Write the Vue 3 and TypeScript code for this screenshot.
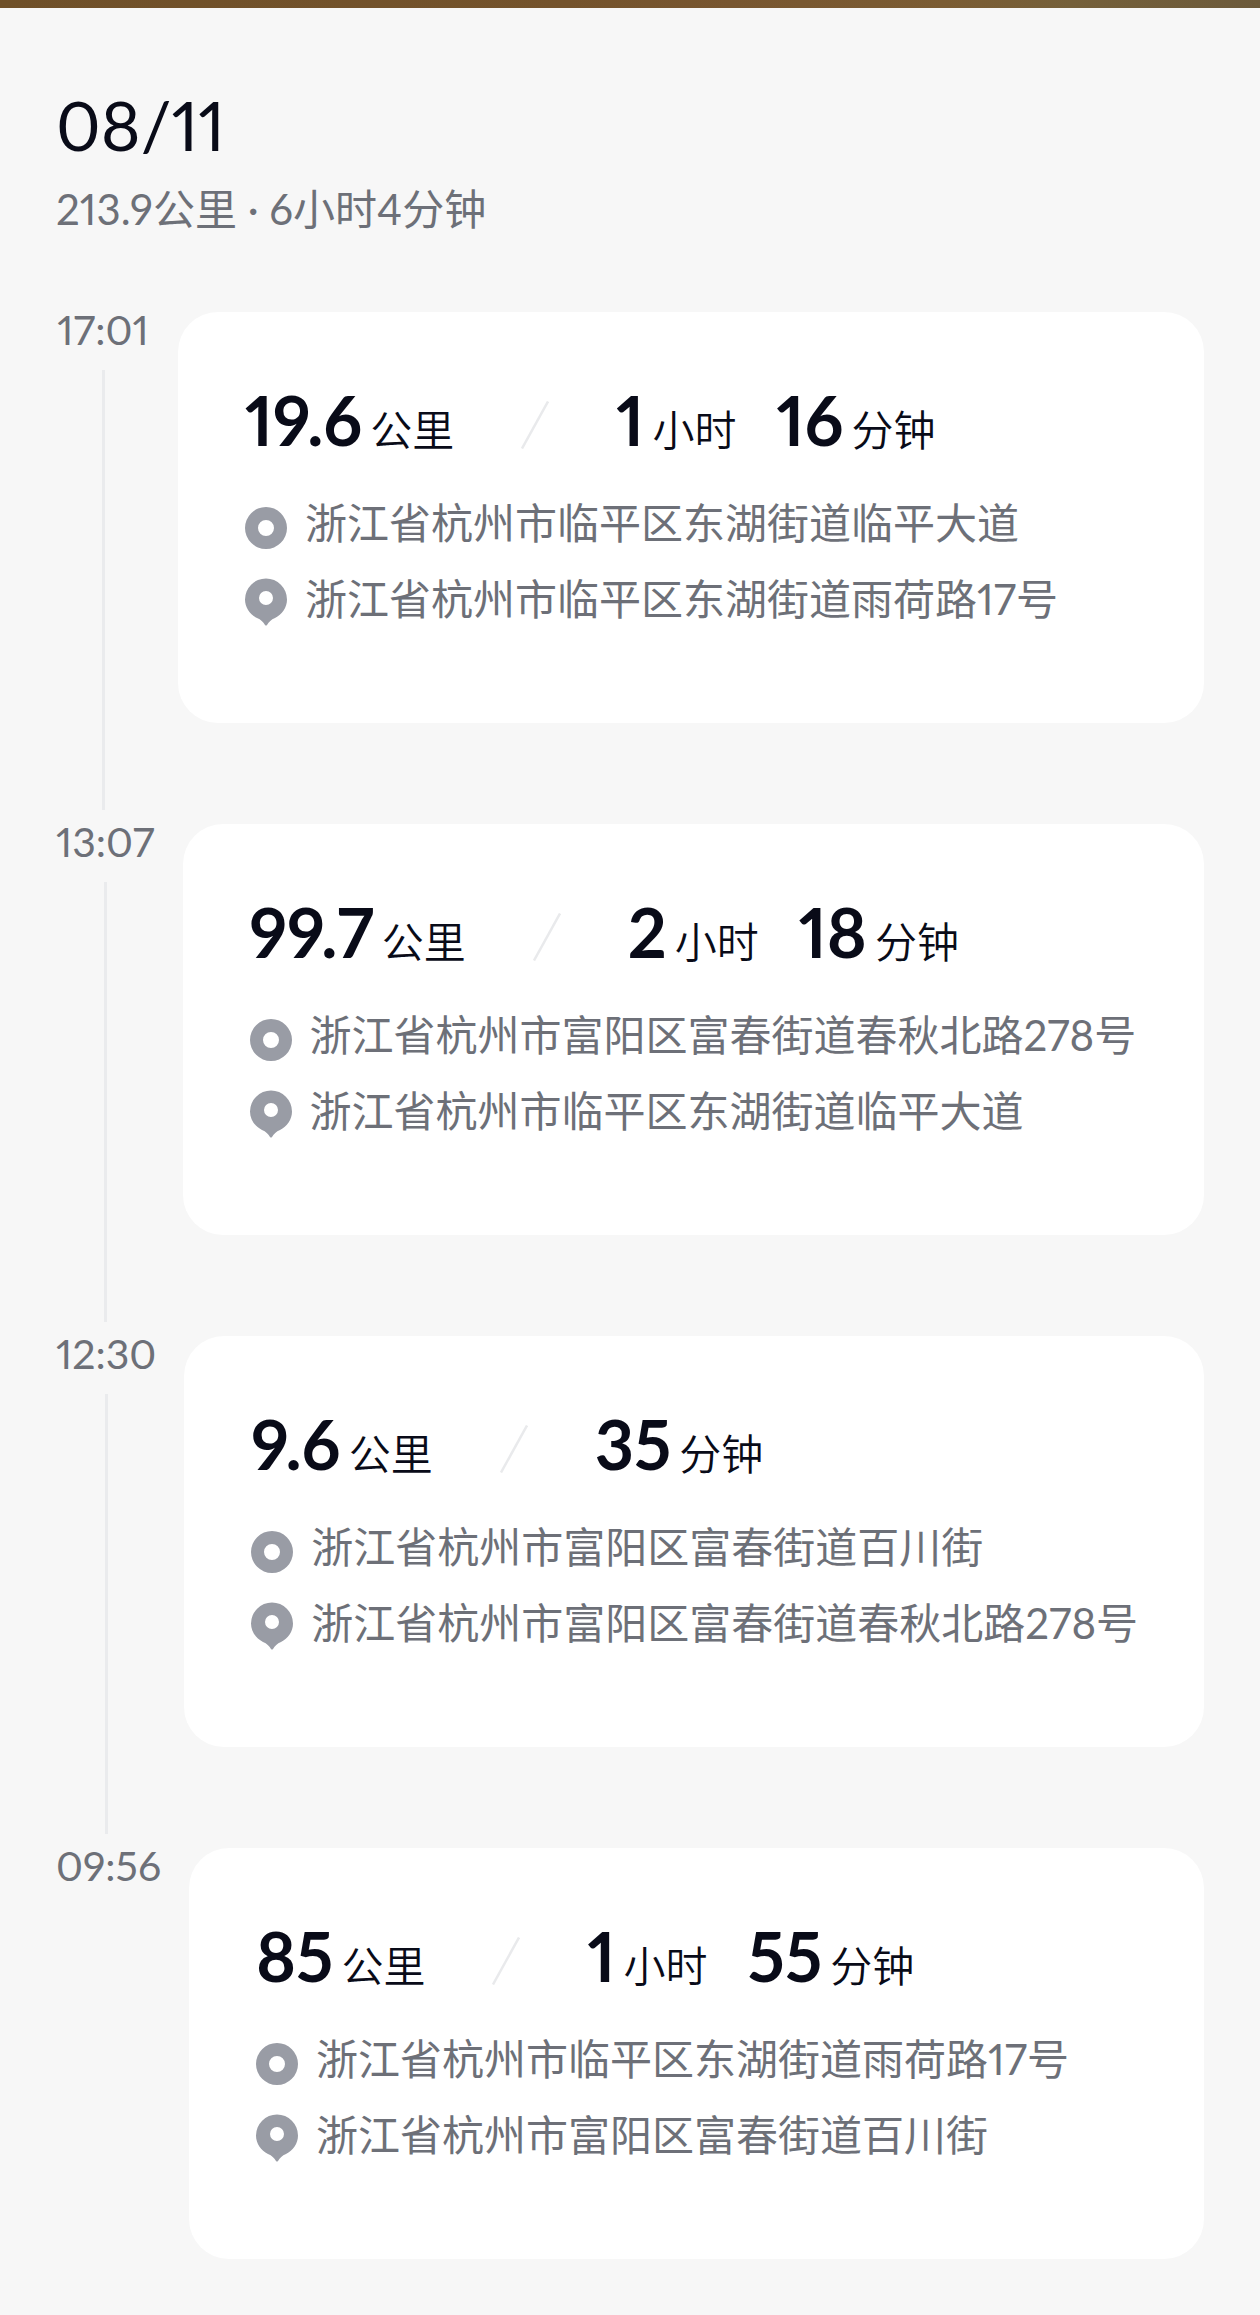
<script setup lang="ts">
interface Measure {
  value: string
  unit: string
}

interface Trip {
  time: string
  distance: Measure
  duration: Measure[]
  from: string
  to: string
}

const date = '08/11'
const summary = '213.9公里 · 6小时4分钟'

const trips: Trip[] = [
  {
    time: '17:01',
    distance: { value: '19.6', unit: '公里' },
    duration: [
      { value: '1', unit: '小时' },
      { value: '16', unit: '分钟' },
    ],
    from: '浙江省杭州市临平区东湖街道临平大道',
    to: '浙江省杭州市临平区东湖街道雨荷路17号',
  },
  {
    time: '13:07',
    distance: { value: '99.7', unit: '公里' },
    duration: [
      { value: '2', unit: '小时' },
      { value: '18', unit: '分钟' },
    ],
    from: '浙江省杭州市富阳区富春街道春秋北路278号',
    to: '浙江省杭州市临平区东湖街道临平大道',
  },
  {
    time: '12:30',
    distance: { value: '9.6', unit: '公里' },
    duration: [{ value: '35', unit: '分钟' }],
    from: '浙江省杭州市富阳区富春街道百川街',
    to: '浙江省杭州市富阳区富春街道春秋北路278号',
  },
  {
    time: '09:56',
    distance: { value: '85', unit: '公里' },
    duration: [
      { value: '1', unit: '小时' },
      { value: '55', unit: '分钟' },
    ],
    from: '浙江省杭州市临平区东湖街道雨荷路17号',
    to: '浙江省杭州市富阳区富春街道百川街',
  },
]
</script>

<template>
  <main class="page">
    <div class="cover"></div>
    <header class="day">
      <h1 class="date">{{ date }}</h1>
      <p class="summary">{{ summary }}</p>
    </header>

    <ol class="timeline">
      <li v-for="trip in trips" :key="trip.time" class="entry">
        <div class="rail">
          <time class="time">{{ trip.time }}</time>
          <span class="line"></span>
        </div>

        <article class="card">
          <div class="stats">
            <p class="measure">
              <strong class="value">{{ trip.distance.value }}</strong>
              <span class="unit">{{ trip.distance.unit }}</span>
            </p>
            <svg class="slash" viewBox="0 0 28 48" aria-hidden="true">
              <path d="M1 47.500L27 .500" fill="none" stroke="#e9eaec" stroke-width="2.500" />
            </svg>
            <div class="duration">
              <p v-for="part in trip.duration" :key="part.unit" class="measure">
                <strong class="value">{{ part.value }}</strong>
                <span class="unit">{{ part.unit }}</span>
              </p>
            </div>
          </div>

          <div class="places">
            <p class="place">
              <svg class="marker" viewBox="0 0 42 48" aria-hidden="true">
                <path
                  fill="#999ca5"
                  fill-rule="evenodd"
                  d="M21 5a21 21 0 1 1 0 42a21 21 0 1 1 0-42zM21 18a8 8 0 1 0 0 16a8 8 0 1 0 0-16z"
                />
              </svg>
              <span>{{ trip.from }}</span>
            </p>
            <p class="place">
              <svg class="marker" viewBox="0 0 42 48" aria-hidden="true">
                <path
                  fill="#999ca5"
                  fill-rule="evenodd"
                  d="M21 0.500a21 21 0 0 1 21 21c0 8-5 15-12 18.500c-4 1.500-6 4-8 7q-1 1-2 0c-2-3-4-5.500-8-7C5 36.500 0 29.500 0 21.500a21 21 0 0 1 21-21zM21 13a7 7 0 1 0 0 14a7 7 0 1 0 0-14z"
                />
              </svg>
              <span>{{ trip.to }}</span>
            </p>
          </div>
        </article>
      </li>
    </ol>
  </main>
</template>

<style>
body {
  margin: 0;
  background: #f7f7f7;
}
</style>

<style scoped>
.page {
  color: #6d7078;
  font-family: Lato, 'Noto Sans CJK SC', sans-serif;
  font-size: 42px;
  font-variant-numeric: proportional-nums;
  padding-bottom: 56px;
}

.cover {
  height: 8px;
  background: linear-gradient(90deg, #6f5029 0%, #74532c 45%, #785630 58%, #7b5c33 75%, #75603a 85%, #6c5a3b 100%);
}

h1,
p,
ol {
  margin: 0;
  padding: 0;
}

.day {
  padding: 75px 56px 0;
}

.date {
  color: #090b18;
  font-size: 68px;
  font-weight: 400;
  line-height: 84px;
}

.summary {
  line-height: 60px;
  margin-top: 12px;
}

.timeline {
  list-style: none;
  padding: 59px 56px 0;
}

.entry {
  display: flex;
  gap: 28px;
}

.rail {
  display: flex;
  flex-direction: column;
  align-items: center;
  min-width: 94px;
}

.time {
  height: 72px;
  font-size: 41px;
  line-height: 64px;
}

.line {
  flex: 1;
  width: 3px;
  background: #eaebed;
}

.entry:last-child .line {
  display: none;
}

.card {
  flex: 1;
  min-width: 0;
  margin: 14px 0 87px;
  padding: 73px 56px 85px 67px;
  border-radius: 40px;
  background: #fff;
}

.entry:last-child .card {
  margin-bottom: 0;
}

.stats {
  display: flex;
  align-items: center;
  gap: 67px;
  height: 80px;
  color: #090b18;
}

.duration {
  display: flex;
  gap: 40px;
}

.measure {
  display: flex;
  align-items: baseline;
  gap: 8px;
  line-height: 80px;
}

.value {
  font-size: 68px;
  font-weight: 700;
}

.unit {
  font-weight: 350;
}

.slash {
  flex: none;
  width: 28px;
  height: 48px;
}

.places {
  margin-top: 20px;
}

.place {
  display: flex;
  align-items: center;
  gap: 18px;
  line-height: 76px;
}

.marker {
  flex: none;
  width: 42px;
  height: 48px;
  margin-top: 6px;
}

.card .places {
  padding-bottom: 1px;
}
</style>
